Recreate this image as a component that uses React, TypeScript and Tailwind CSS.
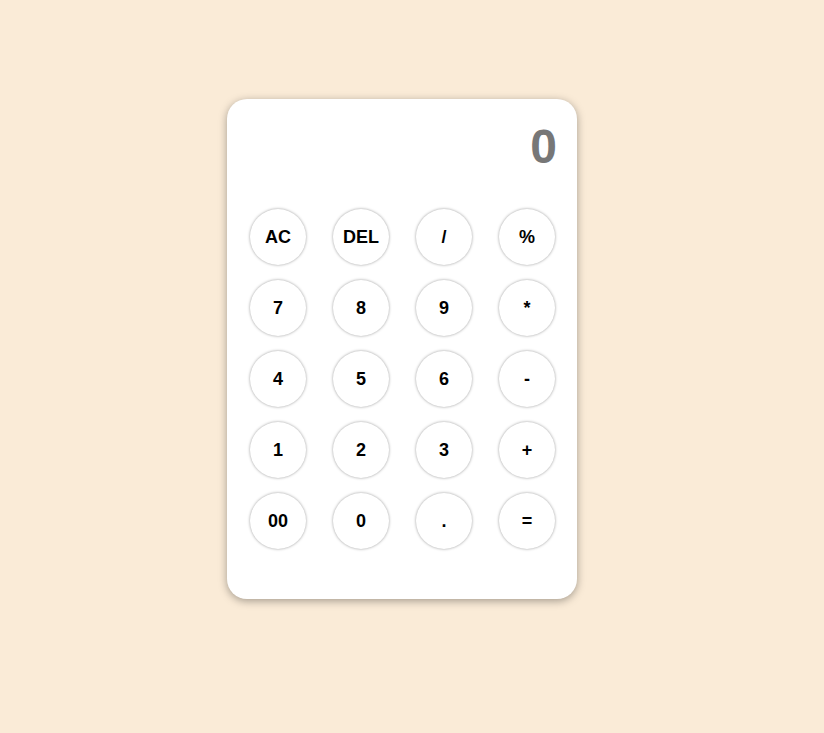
import React from "react";

const rows = [
  ["AC", "DEL", "/", "%"],
  ["7", "8", "9", "*"],
  ["4", "5", "6", "-"],
  ["1", "2", "3", "+"],
  ["00", "0", ".", "="],
];

export default function App() {
  return (
    <div
      className="w-full min-h-[733px] bg-[#faebd7] pt-[99px]"
      style={{ fontFamily: '"Liberation Sans", Arial, sans-serif' }}
    >
      <div className="ml-[227px] w-[350px] h-[500px] bg-white rounded-[20px] shadow-[0_2px_8px_rgba(0,0,0,0.35)] flex flex-col">
        <div className="h-[110px] px-[20px] pt-[20px] text-right text-[48px] font-bold text-[#777777] leading-[56px]">
          0
        </div>
        <div className="flex flex-col gap-[15px] pl-[23px] pr-[22px]">
          {rows.map((r, i) => (
            <div key={i} className="flex justify-between">
              {r.map((k) => (
                <button
                  key={k}
                  className="w-[56px] h-[56px] rounded-full bg-white shadow-[0_0_3px_rgba(0,0,0,0.4)] text-[18px] font-bold text-black flex items-center justify-center"
                >
                  {k}
                </button>
              ))}
            </div>
          ))}
        </div>
      </div>
    </div>
  );
}
